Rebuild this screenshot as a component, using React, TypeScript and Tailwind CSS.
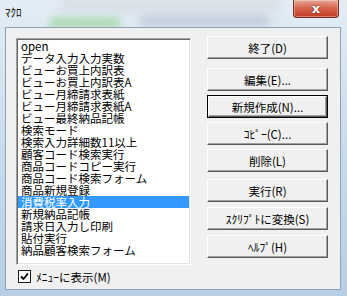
import React from 'react';

const items = [
  'open',
  'データ入力入力実数',
  'ビューお買上内訳表',
  'ビューお買上内訳表A',
  'ビュー月締請求表紙',
  'ビュー月締請求表紙A',
  'ビュー最終納品記帳',
  '検索モード',
  '検索入力詳細数11以上',
  '顧客コード検索実行',
  '商品コードコピー実行',
  '商品コード検索フォーム',
  '商品新規登録',
  '消費税率入力',
  '新規納品記帳',
  '請求日入力し印刷',
  '貼付実行',
  '納品顧客検索フォーム',
];

const font = { fontFamily: '"Noto Sans CJK JP", "Noto Sans", sans-serif' };

const Btn: React.FC<{ label: string; focused?: boolean; className?: string }> = ({ label, focused, className }) => (
  <div className={`w-[121px] h-[23px] ${focused ? 'border border-black' : ''} ${className ?? ''}`}>
    <div className="w-full h-full bg-[#f0f0f0] border-t border-l border-t-white border-l-white border-b border-r border-b-[#5a5a5a] border-r-[#5a5a5a] shadow-[inset_-1px_-1px_0_#a0a0a0] flex items-center justify-center text-[11.5px] leading-[12px] text-black">
      {label}
    </div>
  </div>
);

export default function App() {
  return (
    <div className="w-[347px] h-[296px] relative overflow-hidden bg-gradient-to-b from-[#e4edf5] via-[#c9dbec] to-[#b7cee6]" style={font}>
      {/* blurred glass behind the title */}
      <div className="absolute left-[50px] top-[18px] w-[70px] h-[10px] bg-[#8fcf8a] blur-[4px] opacity-70" />
      <div className="absolute left-[140px] top-[16px] w-[130px] h-[10px] bg-[#9aa8b8] blur-[5px] opacity-50" />
      <div className="absolute left-[60px] top-0 w-[220px] h-[10px] bg-[#c8ccd2] blur-[6px] opacity-60" />

      <div className="relative h-[27px] flex items-start justify-between">
        <span className="ml-[5px] mt-[7px] text-[11px] leading-[11px] text-black">ﾏｸﾛ</span>
        <div className="mr-[8px] w-[46px] h-[18px] rounded-b-[4px] border border-t-0 border-[#7a2a20] bg-gradient-to-b from-[#e8a594] via-[#d4604a] to-[#c23b22] flex items-center justify-center shadow-[inset_0_0_0_1px_rgba(255,255,255,0.35)]">
          <span className="text-white text-[13px] leading-[13px] font-bold [text-shadow:0_0_2px_#5a1a10]" style={{ fontFamily: '"DejaVu Sans", sans-serif' }}>x</span>
        </div>
      </div>

      <div className="relative ml-[5px] w-[336px] h-[263px] bg-[#f0f0f0] border border-[#8ea3b8] flex pl-[10px] pt-[10px]">
        <div className="flex flex-col">
          <div className="w-[175px] h-[227px] bg-white border-t border-l border-t-[#a0a0a0] border-l-[#a0a0a0] border-b border-r border-b-white border-r-white shadow-[inset_1px_1px_0_#696969,inset_-1px_-1px_0_#e3e3e3] pt-[1px] pl-[1px] pr-[1px]">
            {items.map((it, i) => (
              <div
                key={i}
                className={`h-[12px] pl-[3px] text-[11.5px] leading-[12px] whitespace-nowrap ${i === 13 ? 'bg-[#3399ff] text-white' : 'text-black'}`}
              >
                {it}
              </div>
            ))}
          </div>
          <div className="mt-[5px] ml-[2px] flex items-center gap-[5px]">
            <div className="w-[13px] h-[13px] bg-white border border-[#1c1c1c] flex items-center justify-center">
              <svg width="9" height="9" viewBox="0 0 9 9">
                <path d="M1 4.5 L3.5 7 L8 1.5" stroke="#000" strokeWidth="1.8" fill="none" />
              </svg>
            </div>
            <span className="text-[11.5px] leading-[12px] text-black">ﾒﾆｭｰに表示(M)</span>
          </div>
        </div>

        <div className="ml-[16px] -mt-[2px] flex flex-col">
          <Btn label="終了(D)" />
          <Btn label="編集(E)..." className="mt-[9px]" />
          <Btn label="新規作成(N)..." focused className="mt-[4px]" />
          <Btn label="ｺﾋﾟｰ(C)..." className="mt-[4px]" />
          <Btn label="削除(L)" className="mt-[4px]" />
          <Btn label="実行(R)" className="mt-[7px]" />
          <Btn label="ｽｸﾘﾌﾟﾄに変換(S)" className="mt-[5px]" />
          <Btn label="ﾍﾙﾌﾟ(H)" className="mt-[5px]" />
        </div>
      </div>
    </div>
  );
}
